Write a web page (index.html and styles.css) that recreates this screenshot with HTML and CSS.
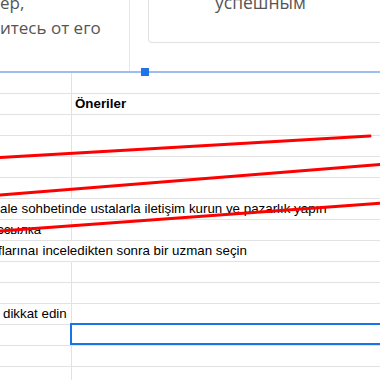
FILE: index.html
```html
<!DOCTYPE html>
<html lang="tr">
<head>
    <meta charset="UTF-8">
    <meta name="viewport" content="width=device-width, initial-scale=1.0">
    <title>Öneriler - Sheet</title>
    <link rel="stylesheet" href="styles.css">
</head>
<body>
    <div class="embed">
        <div class="embed-pic">
            <div class="card card-left">
                <p class="card-text">ер,</p>
                <p class="card-text">итесь от его</p>
            </div>
            <div class="card card-right">
                <p class="card-text">успешным</p>
            </div>
        </div>
        <span class="handle"></span>
    </div>

    <div class="sheet">
        <div class="row"><div class="cell col-a"></div><div class="cell col-b"></div></div>
        <div class="row"><div class="cell col-a"></div><div class="cell col-b head">Öneriler</div></div>
        <div class="row"><div class="cell col-a"></div><div class="cell col-b"></div></div>
        <div class="row"><div class="cell col-a"></div><div class="cell col-b"></div></div>
        <div class="row"><div class="cell col-a"></div><div class="cell col-b"></div></div>
        <div class="row"><div class="cell col-a"></div><div class="cell col-b"></div></div>
        <div class="row"><div class="cell col-a spill"><span class="cut cut-1">ale sohbetinde ustalarla iletişim kurun ve pazarlık yapın</span></div><div class="cell col-b"></div></div>
        <div class="row"><div class="cell col-a"><span class="cut cut-2">ссылка</span></div><div class="cell col-b"></div></div>
        <div class="row"><div class="cell col-a spill"><span class="cut cut-3">flarınaı inceledikten sonra bir uzman seçin</span></div><div class="cell col-b"></div></div>
        <div class="row"><div class="cell col-a"></div><div class="cell col-b"></div></div>
        <div class="row"><div class="cell col-a"></div><div class="cell col-b"></div></div>
        <div class="row"><div class="cell col-a">dikkat edin</div><div class="cell col-b"></div></div>
        <div class="row"><div class="cell col-a"></div><div class="cell col-b selected"></div></div>
        <div class="row"><div class="cell col-a"></div><div class="cell col-b"></div></div>
        <div class="row"><div class="cell col-a"></div><div class="cell col-b"></div></div>
    </div>

    <!-- hand-drawn strike lines over the sheet -->
    <svg class="marks" width="380" height="380" viewBox="0 0 380 380">
        <line x1="0" y1="157.5" x2="370" y2="136" />
        <line x1="0" y1="195" x2="380" y2="164.5" />
        <line x1="0" y1="231" x2="380" y2="203.3" />
    </svg>
</body>
</html>
```

FILE: styles.css
```css
body {
    margin: 0;
    width: 380px;
    height: 380px;
    overflow: hidden;
    background-color: #ffffff;
    font-family: 'Liberation Sans', Arial, sans-serif;
    position: relative;
}
.embed {
    position: relative;
    height: 71px;
    border-bottom: 2px solid #9bbdf0;
}
.embed-pic {
    display: flex;
    height: 71px;
    overflow: hidden;
    gap: 18px;
}
.card {
    box-sizing: border-box;
    background-color: #ffffff;
    font-family: 'Open Sans', sans-serif;
    color: #555555;
    line-height: 25px;
}
.card-left {
    width: 130px;
    height: 71px;
    border-right: 1px solid #e6e6e6;
    font-size: 17px;
}
.card-left .card-text:first-child {
    margin-top: -10px;
}
.card-right {
    flex: 1;
    height: 43px;
    border-left: 1px solid #e2e2e2;
    border-bottom: 1px solid #e2e2e2;
    border-bottom-left-radius: 4px;
    padding-left: 66px;
    font-size: 17.5px;
}
.card-right .card-text {
    margin-top: -10px;
}
.card-text {
    margin: 0;
    white-space: nowrap;
}
.handle {
    position: absolute;
    left: 141px;
    top: 68px;
    width: 8px;
    height: 8px;
    background-color: #1f74e6;
}
.sheet {
    display: flex;
    flex-direction: column;
}
.row {
    display: flex;
    height: 21px;
}
.cell {
    box-sizing: border-box;
    height: 21px;
    border-bottom: 1px solid #e2e2e2;
    font-size: 13.33px;
    line-height: 20px;
    color: #000000;
    padding: 0 3px;
    white-space: nowrap;
}
.col-a {
    width: 72px;
    border-right: 1px solid #e2e2e2;
}
.col-b {
    flex: 1;
}
.spill {
    overflow: visible;
    border-right-color: transparent;
    position: relative;
    z-index: 1;
}
.head {
    font-weight: bold;
}
.cut {
    display: inline-block;
}
.cut-1 {
    margin-left: -3px;
}
.cut-2 {
    margin-left: -6px;
}
.cut-3 {
    margin-left: -5px;
}
.selected {
    position: relative;
}
.selected::after {
    content: '';
    position: absolute;
    top: -2px;
    left: -2px;
    right: -4px;
    bottom: 0;
    border: 2px solid #1a73e8;
}
.marks {
    position: absolute;
    top: 0;
    left: 0;
    pointer-events: none;
    z-index: 2;
}
.marks line {
    stroke: #ff0000;
    stroke-width: 3;
    stroke-linecap: round;
}
```
